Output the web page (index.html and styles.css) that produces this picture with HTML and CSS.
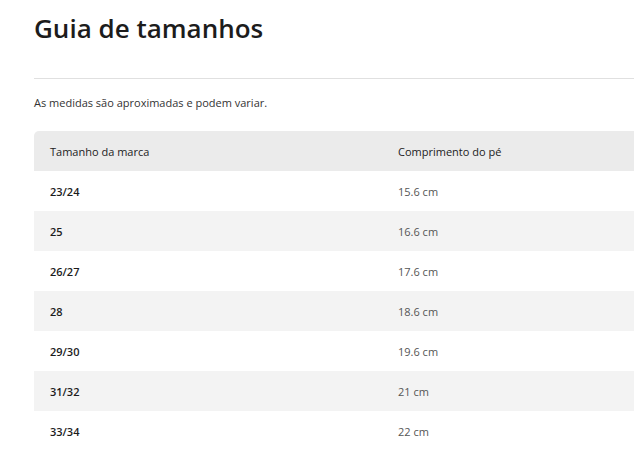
FILE: index.html
```html
<!DOCTYPE html>
<html lang="pt">
<head>
<meta charset="utf-8">
<title>Guia de tamanhos</title>
<link rel="stylesheet" href="styles.css">
</head>
<body>
<div class="page">
  <h1 class="title">Guia de tamanhos</h1>
  <hr class="divider">
  <p class="note">As medidas são aproximadas e podem variar.</p>
  <table class="sizes">
    <colgroup><col class="col-size"><col class="col-len"></colgroup>
    <thead>
      <tr><th>Tamanho da marca</th><th>Comprimento do pé</th></tr>
    </thead>
    <tbody>
      <tr><td class="size">23/24</td><td class="len">15.6 cm</td></tr>
      <tr><td class="size">25</td><td class="len">16.6 cm</td></tr>
      <tr><td class="size">26/27</td><td class="len">17.6 cm</td></tr>
      <tr><td class="size">28</td><td class="len">18.6 cm</td></tr>
      <tr><td class="size">29/30</td><td class="len">19.6 cm</td></tr>
      <tr><td class="size">31/32</td><td class="len">21 cm</td></tr>
      <tr><td class="size">33/34</td><td class="len">22 cm</td></tr>
    </tbody>
  </table>
</div>
</body>
</html>
```
FILE: styles.css
```css
html, body {
  margin: 0;
  padding: 0;
  background: #fff;
}
body {
  font-family: "Open Sans", "Liberation Sans", sans-serif;
  color: #222;
}
.page {
  padding: 0 0 0 34px;
}
.title {
  margin: 0;
  padding-top: 11px;
  font-family: "Open Sans", "Lato", sans-serif;
  font-weight: 600;
  font-size: 26px;
  line-height: 34px;
  color: #1c1c1c;
}
.divider {
  border: 0;
  border-top: 1px solid #e0e0e0;
  margin: 33px 0 0 0;
}
.note {
  margin: 16px 0 0 0;
  font-size: 11px;
  line-height: 16px;
  color: #333;
}
.sizes {
  margin-top: 20px;
  width: 100%;
  border-collapse: separate;
  border-spacing: 0;
  font-size: 11px;
  table-layout: fixed;
}
.col-size {
  width: 348px;
}
.sizes th {
  background: #ebebeb;
  text-align: left;
  font-weight: 500;
  height: 40px;
  padding: 0 16px;
  color: #222;
}
.sizes th:first-child {
  border-top-left-radius: 5px;
}
.sizes td {
  height: 40px;
  padding: 0 16px;
}
.sizes tbody tr:nth-child(even) td {
  background: #f3f3f3;
}
.size {
  font-weight: 600;
  color: #1c1c1c;
}
.len {
  color: #555;
}
```
